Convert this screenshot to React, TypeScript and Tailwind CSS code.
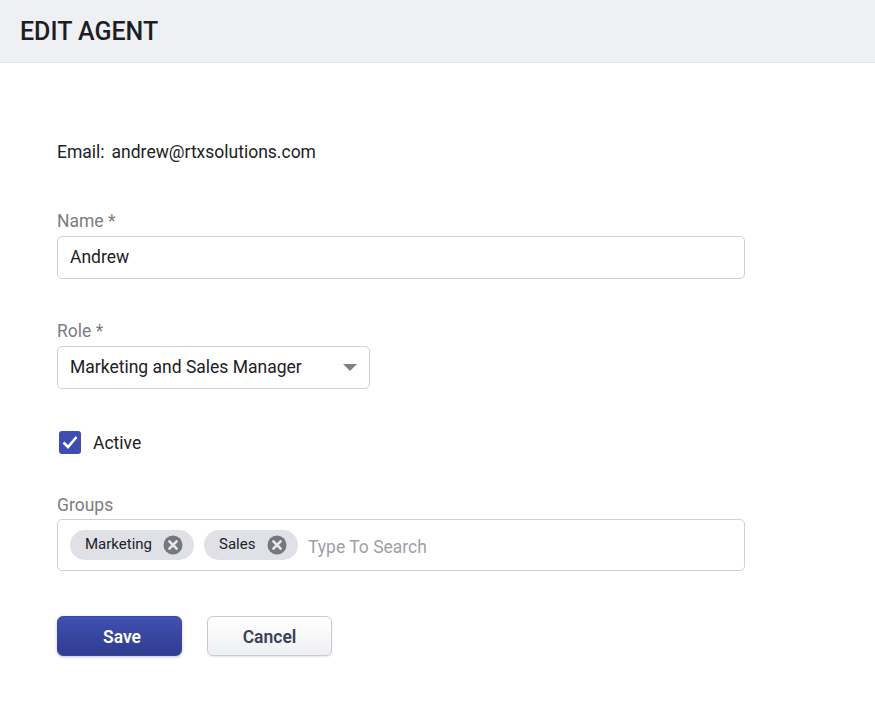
const font = "font-['Roboto',sans-serif]";

function Chip({ label, width }: { label: string; width: string }) {
  return (
    <span className={`flex h-[30px] items-center justify-between rounded-[15px] bg-[#e0e1e6] pl-[15px] pr-[11px] ${width}`}>
      <span className="relative top-[-1px] text-[15px] text-[#212126]">{label}</span>
      <svg width="20" height="20" viewBox="0 0 20 20">
        <circle cx="10" cy="10" r="9.5" fill="#76777c" />
        <path d="M6.4 6.4l7.2 7.2M13.6 6.4l-7.2 7.2" stroke="#e8e9ec" strokeWidth="2.6" strokeLinecap="round" />
      </svg>
    </span>
  );
}

export default function App() {
  return (
    <div className={`${font} min-h-[704px] bg-white text-[#212126]`}>
      <header className="flex h-[63px] items-center border-b border-[#e3e4e8] bg-[#eef0f4] pl-5 pt-[1px]">
        <h1 className="text-[25px] font-medium text-[#1e1e22]">EDIT AGENT</h1>
      </header>

      <main className="w-[745px] pl-[57px] pt-[77px]">
        <div className="flex h-6 items-center text-[17.5px]">
          <span>Email:</span>
          <span className="ml-[7px]">andrew@rtxsolutions.com</span>
        </div>

        <label className="mt-[44px] block h-[26px] text-[17.5px] leading-[26px] text-[#7c7c7e]">Name *</label>
        <input
          readOnly
          value="Andrew"
          className="mt-[2px] block h-[43px] w-full rounded-[5px] border border-[#cfd0d4] px-3 pb-[2px] text-[17.5px] outline-none"
        />

        <label className="mt-[39px] block h-[26px] text-[17.5px] leading-[26px] text-[#7c7c7e]">Role *</label>
        <div className="mt-[2px] flex h-[43px] w-[313px] items-center justify-between rounded-[5px] border border-[#cfd0d4] pl-3 pr-[12px] text-[17.5px]">
          <span>Marketing and Sales Manager</span>
          <svg width="14" height="7" viewBox="0 0 14 7">
            <path d="M0 0h14L7 7z" fill="#808084" />
          </svg>
        </div>

        <div className="mt-[41px] flex h-6 items-center">
          <span className="ml-[2px] flex h-[23px] w-[22px] items-center justify-center rounded-[3px] bg-[#3e4eb0]">
            <svg width="16" height="14" viewBox="0 0 16 14" fill="none">
              <path d="M1.5 7.5l4.5 4.5 8.5-10" stroke="white" strokeWidth="2.6" />
            </svg>
          </span>
          <span className="relative top-[1px] ml-[12px] text-[17.5px]">Active</span>
        </div>

        <label className="mt-[38px] block h-[26px] text-[17.5px] leading-[26px] text-[#7c7c7e]">Groups</label>
        <div className="mt-[1px] flex h-[52px] w-full items-center rounded-[5px] border border-[#cfd0d4] pl-3">
          <Chip label="Marketing" width="w-[124px]" />
          <span className="ml-[10px]">
            <Chip label="Sales" width="w-[94px]" />
          </span>
          <span className="relative top-[2px] ml-[10px] text-[17.5px] text-[#a0a0a4]">Type To Search</span>
        </div>

        <div className="mt-[45px] flex gap-[25px]">
          <button className="h-10 w-[125px] rounded-[6px] border border-[#3a479f] bg-gradient-to-b from-[#4150b2] to-[#2f3c8f] pl-[5px] pt-[3px] text-[17.5px] font-semibold text-white shadow-[0_1px_3px_rgba(47,60,143,0.3)]">
            Save
          </button>
          <button className="h-10 w-[125px] rounded-[6px] border border-[#c9cad2] bg-gradient-to-b from-white to-[#eff0f4] pt-[3px] text-[17.5px] font-semibold text-[#3c4159] shadow-[0_1px_2px_rgba(0,0,0,0.1)]">
            Cancel
          </button>
        </div>
      </main>
    </div>
  );
}
